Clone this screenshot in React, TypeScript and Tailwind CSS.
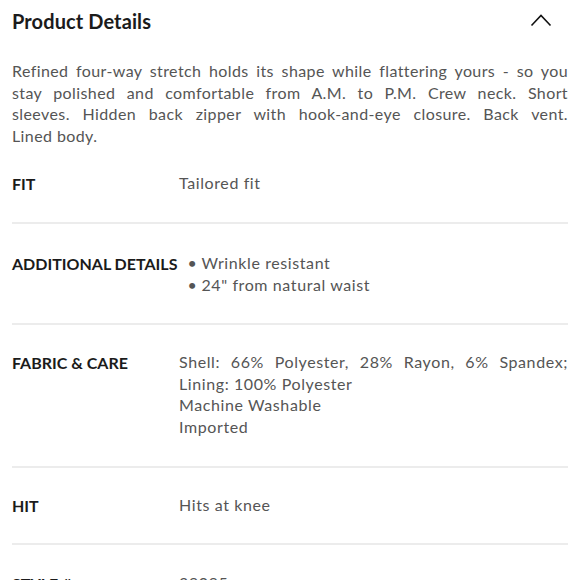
import { useState } from "react"

const intro = [
    "Refined four-way stretch holds its shape while flattering yours - so you",
    "stay polished and comfortable from A.M. to P.M. Crew neck. Short",
    "sleeves. Hidden back zipper with hook-and-eye closure. Back vent.",
    "Lined body.",
]

const rows = [
    { label: "FIT", values: ["Tailored fit"], pad: "pb-[27px]" },
    { label: "ADDITIONAL DETAILS", bullets: ["Wrinkle resistant", '24" from natural waist'], pad: "py-[28px]" },
    {
        label: "FABRIC & CARE",
        values: ["Shell: 66% Polyester, 28% Rayon, 6% Spandex;", "Lining: 100% Polyester", "Machine Washable", "Imported"],
        justifyFirst: true,
        pad: "pt-[26px] pb-[28px]",
    },
    { label: "HIT", values: ["Hits at knee"], pad: "pt-[26px] pb-[27px]" },
    { label: "STYLE #", values: ["39095"], pad: "pt-[27px] pb-[28px]" },
]

export default function App() {
    const [open, setOpen] = useState(true)

    return (
        <div className="w-[580px] h-[580px] overflow-hidden bg-white px-3 font-['Lato',sans-serif]">
            {/* Header */}
            <div className="flex items-center justify-between h-[42px]">
                <h2 className="text-[20px] font-bold text-[#1b1b1b] tracking-[0.1px]">Product Details</h2>
                <button onClick={() => setOpen(!open)} className="mr-[16px] mt-[-2px]">
                    <svg width="22" height="14" viewBox="0 0 22 14" fill="none">
                        <path d="M1.5 12.5 L11 2.5 L20.5 12.5" stroke="#111" strokeWidth="1.6" />
                    </svg>
                </button>
            </div>

            {open && (
                <div>
                    <div className="mt-[18px] text-[16px] leading-[21.6px] text-[#555] tracking-[0.4px]">
                        {intro.map((line, i) => (
                            <div
                                key={line}
                                className={i < intro.length - 1 ? "text-justify [text-align-last:justify]" : ""}
                            >
                                {line}
                            </div>
                        ))}
                    </div>

                    <div className="mt-[26px]">
                        {rows.map((row) => (
                            <div key={row.label}>
                                <div className={`flex gap-2 ${row.pad}`}>
                                    <div className="min-w-[159px] whitespace-nowrap text-[16px] font-bold text-[#1b1b1b] leading-[21.6px] pt-[1px]">
                                        {row.label}
                                    </div>
                                    <div className="flex-1 text-[16px] leading-[21.6px] text-[#555] tracking-[0.6px]">
                                        {row.values?.map((v, j) => (
                                            <div
                                                key={v}
                                                className={row.justifyFirst && j === 0 ? "text-justify [text-align-last:justify]" : ""}
                                            >
                                                {v}
                                            </div>
                                        ))}
                                        {row.bullets?.map((b) => (
                                            <div key={b}>
                                                <span className="inline-block w-[16px] pl-[2px]">•</span>
                                                {b}
                                            </div>
                                        ))}
                                    </div>
                                </div>
                                <div className="h-[2px] bg-[#ececec]" />
                            </div>
                        ))}
                    </div>
                </div>
            )}
        </div>
    )
}
